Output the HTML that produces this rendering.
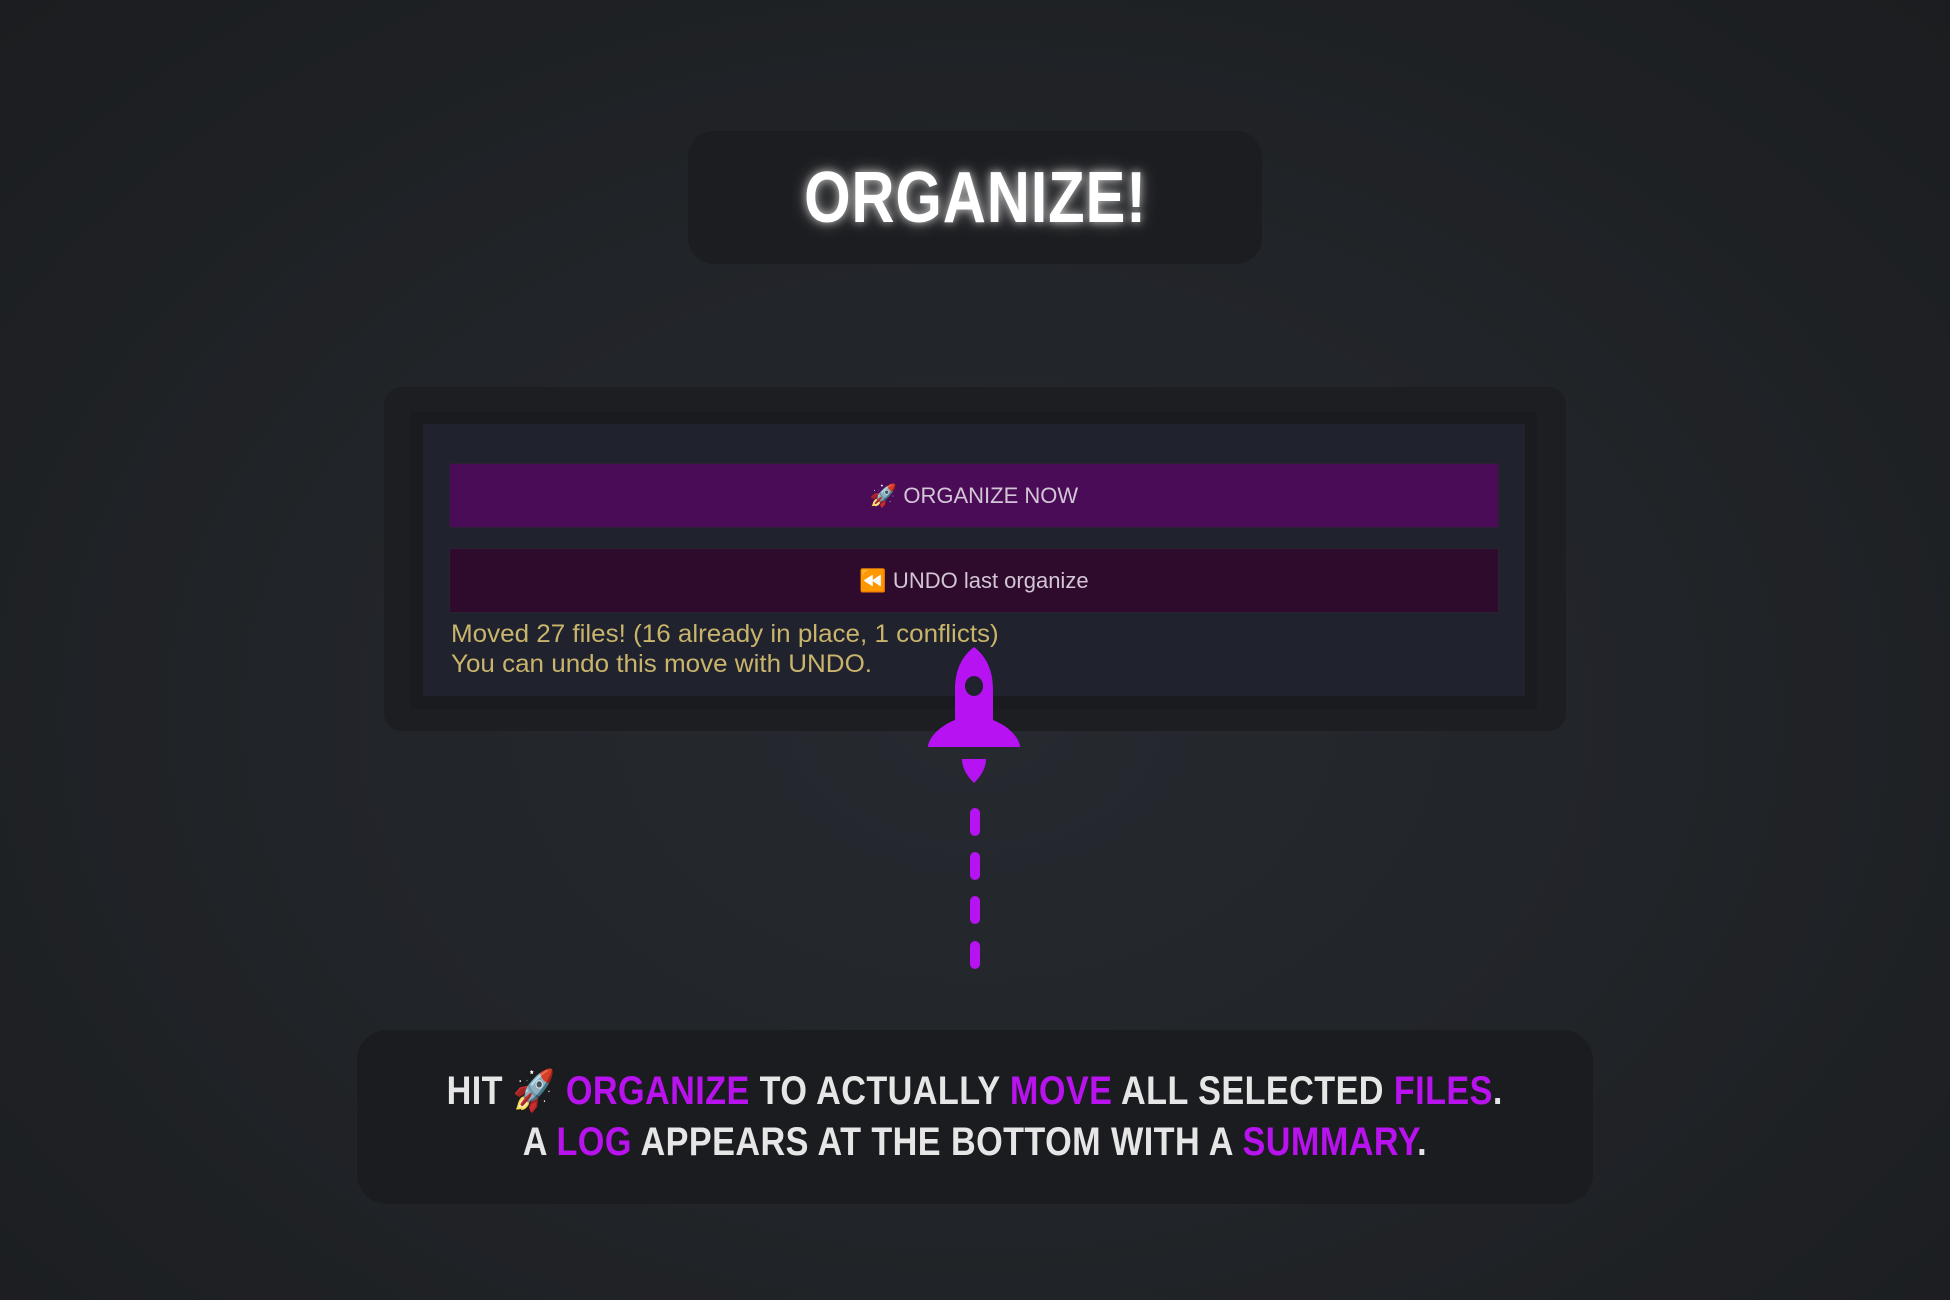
<!DOCTYPE html>
<html><head><meta charset="utf-8"><style>
html,body{margin:0;padding:0}
body{width:1950px;height:1300px;overflow:hidden;position:relative;background:radial-gradient(ellipse at 50% 55%,#262a30 0%,#212428 50%,#1b1d20 100%);font-family:"Liberation Sans",sans-serif}
.abs{position:absolute}
#title{left:688px;top:131px;width:574px;height:133px;background:#1c1d20;border-radius:26px;display:flex;align-items:center;justify-content:center;color:#fff;font-weight:bold;font-size:72px;letter-spacing:1px;text-shadow:0 0 10px rgba(255,255,255,.7),0 0 20px rgba(255,255,255,.35)}
#title span{display:inline-block;transform:scaleX(0.83)}
#outer{left:384px;top:387px;width:1182px;height:344px;background:#1d1e22;border-radius:18px}
#frame{left:410px;top:412px;width:1127px;height:297px;background:#1a1b1f}
#inner{left:423px;top:424px;width:1102px;height:272px;background:#20222d}
.btn{left:449px;width:1050px;height:65px;display:flex;align-items:center;justify-content:center;color:#d2c6d6;font-size:22px;border:1px solid #2a2230;box-sizing:border-box}
#b1{top:463px;background:#4b0c57}
#b2{top:548px;background:#2e0b2c}
#log{left:451px;top:619px;color:#c9b46c;font-size:25px;line-height:30px;transform-origin:0 0;transform:scaleX(1.04)}
#bottom{left:357px;top:1030px;width:1236px;height:174px;background:#1b1c1f;border-radius:30px;display:flex;flex-direction:column;align-items:center;justify-content:center;font-weight:bold;font-size:40px;line-height:51px;color:#e6e6e6;letter-spacing:.5px}
#bottom div{white-space:nowrap;transform:scaleX(0.855)}
.p{color:#b812ee}
.dash{left:970px;width:10px;height:28px;background:#b612f2;border-radius:5px}
</style></head><body>
<div id="title" class="abs"><span>ORGANIZE!</span></div>
<div id="outer" class="abs"></div>
<div id="frame" class="abs"></div>
<div id="inner" class="abs"></div>
<div id="b1" class="abs btn">🚀&nbsp;ORGANIZE NOW</div>
<div id="b2" class="abs btn">⏪&nbsp;UNDO last organize</div>
<div id="log" class="abs">Moved 27 files! (16 already in place, 1 conflicts)<br>You can undo this move with UNDO.</div>
<svg class="abs" style="left:925px;top:645px" width="100" height="140" viewBox="0 0 100 140">
<path d="M49 2 C36 12 30 26 30 45 L30 75 C12 82 3 95 3 102 L95 102 C95 95 86 82 68 75 L68 45 C68 26 62 12 49 2 Z M49 31 A9 10 0 1 0 49.01 31 Z" fill="#b612f2" fill-rule="evenodd"/>
<path d="M37 114 L61 114 C61 124 55 132 49 138 C43 132 37 124 37 114 Z" fill="#b612f2"/>
</svg>
<div class="abs dash" style="top:808px"></div>
<div class="abs dash" style="top:852px"></div>
<div class="abs dash" style="top:896px"></div>
<div class="abs dash" style="top:941px"></div>
<div id="bottom" class="abs">
<div>HIT 🚀 <span class="p">ORGANIZE</span> TO ACTUALLY <span class="p">MOVE</span> ALL SELECTED <span class="p">FILES</span>.</div>
<div>A <span class="p">LOG</span> APPEARS AT THE BOTTOM WITH A <span class="p">SUMMARY</span>.</div>
</div>
</body></html>
